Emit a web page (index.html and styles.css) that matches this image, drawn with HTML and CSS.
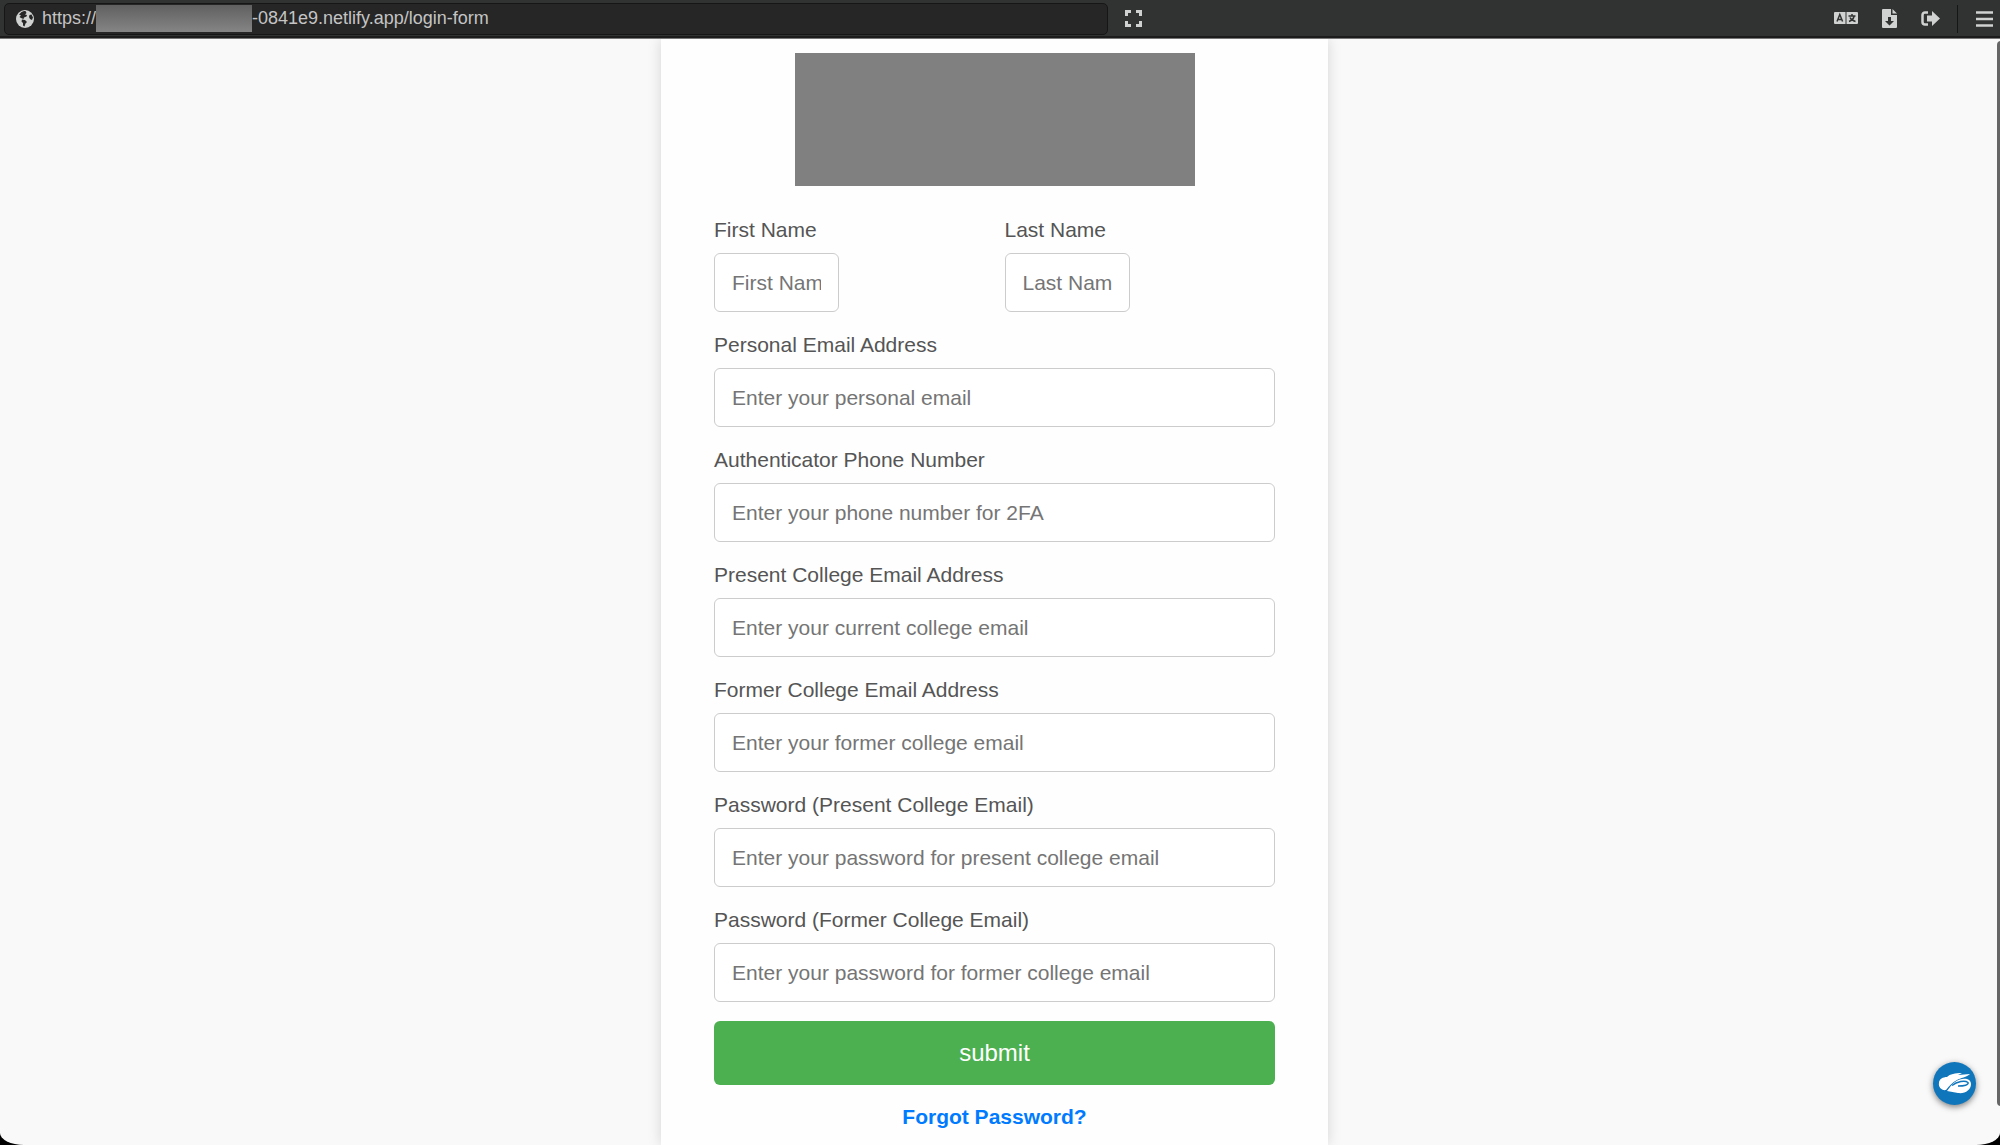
FILE: index.html
```html
<!DOCTYPE html>
<html lang="en">
<head>
    <meta charset="utf-8">
    <title>Login Form</title>
    <link rel="stylesheet" href="styles.css">
</head>
<body>
    <header class="toolbar">
        <div class="address">
            <svg class="globe" viewBox="0 0 18 18">
                <circle cx="9" cy="9" r="9" fill="#d0d1d1"/>
                <path d="M8 1 5.500 2 3 4.500 5 5.500 3.500 7 5 8 7.500 9 8 7.500 10.500 6.500 11 5 9 4.500 10.500 3 9.500 1zM6 9.500 9 10 11 12 9.500 13.500 8.500 16.500 7 15.500 7 13 5.500 11.500zM13.500 5 15.500 4.500 17 7.500 16 10 14 9 13 7z" fill="#262626"/>
            </svg>
            <span class="url"><span>https://</span><span class="hidden-host"></span><span>-0841e9.netlify.app/login-form</span></span>
        </div>
        <button class="icon-button" aria-label="Full screen">
            <svg width="17" height="17" viewBox="0 0 17 17"><path d="M1.500 6V1.500H6M11 1.500h4.500V6M15.500 11v4.500H11M6 15.500H1.500V11" fill="none" stroke="#d0d1d1" stroke-width="3"/></svg>
        </button>
        <nav class="tools">
            <button class="icon-button" aria-label="Translate">
                <svg width="24" height="13" viewBox="0 0 24 13">
                    <path d="M1 0h10.500v12H1a1 1 0 0 1-1-1V1a1 1 0 0 1 1-1zM12.500 0H23a1 1 0 0 1 1 1v10a1 1 0 0 1-1 1H12.500z" fill="#d0d1d1"/>
                    <path d="M3 9.500 5.800 2.500 8.600 9.500M4 7.500h3.600M14.500 4h7M18 2v2M20 4.500C19.500 7 17.500 8.500 15 9.500M16 5.500C17 7.500 19 8.800 21.500 9.500" fill="none" stroke="#303332" stroke-width="1.500"/>
                </svg>
            </button>
            <button class="icon-button" aria-label="Download file">
                <svg width="15" height="19" viewBox="0 0 15 19">
                    <path d="M1 0h8v6h6v12a1 1 0 0 1-1 1H1a1 1 0 0 1-1-1V1a1 1 0 0 1 1-1zM10.500 0 15 4.500h-4.500z" fill="#d0d1d1"/>
                    <path d="M6 8h3v4h3l-4.500 4.500L3 12h3z" fill="#303332"/>
                </svg>
            </button>
            <button class="icon-button" aria-label="Sign out">
                <svg width="19" height="15" viewBox="0 0 19 15">
                    <path d="M7 1.500H4A2.500 2.500 0 0 0 1.500 4v7A2.500 2.500 0 0 0 4 13.500h3" fill="none" stroke="#d0d1d1" stroke-width="2.500"/>
                    <path d="M11 0l8 7.500-8 7.500v-4.500H6v-6h5z" fill="#d0d1d1"/>
                </svg>
            </button>
            <button class="icon-button menu-button" aria-label="Menu">
                <svg width="17" height="16" viewBox="0 0 17 16"><path d="M0 1.500h17M0 8h17M0 14.500h17" stroke="#d0d1d1" stroke-width="2.500"/></svg>
            </button>
        </nav>
    </header>

    <main class="page">
        <form class="login-form">
            <div class="logo"></div>
            <div class="fields">
                <div class="name-row">
                    <div class="field">
                        <label for="first-name">First Name</label>
                        <input type="text" id="first-name" placeholder="First Name">
                    </div>
                    <div class="field">
                        <label for="last-name">Last Name</label>
                        <input type="text" id="last-name" placeholder="Last Name">
                    </div>
                </div>
                <div class="field">
                    <label for="personal-email">Personal Email Address</label>
                    <input type="email" id="personal-email" placeholder="Enter your personal email">
                </div>
                <div class="field">
                    <label for="phone">Authenticator Phone Number</label>
                    <input type="tel" id="phone" placeholder="Enter your phone number for 2FA">
                </div>
                <div class="field">
                    <label for="present-email">Present College Email Address</label>
                    <input type="email" id="present-email" placeholder="Enter your current college email">
                </div>
                <div class="field">
                    <label for="former-email">Former College Email Address</label>
                    <input type="email" id="former-email" placeholder="Enter your former college email">
                </div>
                <div class="field">
                    <label for="present-password">Password (Present College Email)</label>
                    <input type="password" id="present-password" placeholder="Enter your password for present college email">
                </div>
                <div class="field">
                    <label for="former-password">Password (Former College Email)</label>
                    <input type="password" id="former-password" placeholder="Enter your password for former college email">
                </div>
            </div>
            <button class="submit-button" type="submit">submit</button>
            <a class="forgot" href="#">Forgot Password?</a>
        </form>
        <div class="scrollbar"></div>
        <button class="badge" aria-label="Zscaler">
            <svg width="34" height="21" viewBox="0 0 34 21">
                <path d="M8 17C4 18 0 14 1 10 1 6 5 4 9 4 12 1 17 0 24 0L20 2 32 1C29 4 22 5 19 7 15 9 11 13 8 17z" fill="#fff"/>
                <path d="M17 9C24 4 33 5 33 11 33 17 27 21 20 20L9 18C12 14 14 11 17 9z" fill="#fff"/>
                <path d="M14 12.500C19 8.500 27 7 30 9.500 31 12 26 13 20 13" fill="none" stroke="#1076bc" stroke-width="1.500"/>
            </svg>
        </button>
    </main>
</body>
</html>
```
FILE: styles.css
```css
* {
    box-sizing: border-box;
}

body {
    margin: 0;
    height: 100vh;
    display: flex;
    flex-direction: column;
    overflow: hidden;
    background-color: #000;
    font-family: "Liberation Sans", Arial, sans-serif;
}

button {
    border: none;
    padding: 0;
    cursor: pointer;
    font-family: inherit;
}

.toolbar {
    flex: none;
    height: 39px;
    display: flex;
    align-items: center;
    padding: 0 7px 1px 4px;
    background-color: #303332;
    border-bottom: 1px solid #777;
    box-shadow: inset 0 -2px #1c1c1c;
}

.address {
    width: 1104px;
    height: 32px;
    display: flex;
    align-items: center;
    gap: 8px;
    padding-left: 11px;
    background-color: #262626;
    border: 1px solid #161616;
    border-radius: 5px;
}

.globe {
    width: 18px;
    height: 18px;
}

.url {
    display: flex;
    align-items: center;
    font-size: 18px;
    color: #c4c4c4;
}

.hidden-host {
    width: 156px;
    height: 27px;
    background: linear-gradient(#606060, #858585);
}

.icon-button {
    display: flex;
    background: none;
}

.address + .icon-button {
    margin-left: 17px;
}

.tools {
    display: flex;
    align-items: center;
    gap: 24px;
    margin-left: auto;
}

.menu-button {
    height: 28px;
    align-items: center;
    padding-left: 18px;
    margin-left: -7px;
    border-left: 1px solid #161616;
}

.page {
    flex: 1;
    min-height: 0;
    position: relative;
    overflow: hidden;
    padding-right: 11px;
    background-color: #f9f9f9;
    border-radius: 0 0 24px 24px / 0 0 12px 12px;
}

.login-form {
    width: 667px;
    min-height: 100%;
    margin: 0 auto;
    padding: 14px 53px;
    background-color: #fefefe;
    box-shadow: 0 0 13px rgba(0, 0, 0, 0.15);
}

.logo {
    width: 400px;
    height: 133px;
    margin: 0 auto 32px;
    background-color: #808080;
}

.fields {
    display: flex;
    flex-direction: column;
    gap: 21px;
}

.name-row {
    display: grid;
    grid-template-columns: 1fr 1fr;
    gap: 20px;
}

.name-row input {
    width: 125px;
}

label {
    display: block;
    margin-bottom: 11px;
    font-size: 21px;
    line-height: 24px;
    color: #555;
}

input {
    display: block;
    width: 100%;
    height: 59px;
    padding: 0 17px;
    border: 1px solid #ccc;
    border-radius: 6px;
    background-color: #fff;
    font-family: inherit;
    font-size: 21px;
}

input::placeholder {
    color: #757575;
}

.submit-button {
    width: 100%;
    height: 64px;
    margin-top: 19px;
    border-radius: 6px;
    background-color: #4caf50;
    color: #fff;
    font-size: 24px;
}

.forgot {
    display: block;
    margin-top: 20px;
    text-align: center;
    font-size: 21px;
    line-height: 24px;
    font-weight: bold;
    color: #007bff;
    text-decoration: none;
}

.scrollbar {
    position: absolute;
    top: 2px;
    right: -5px;
    width: 8px;
    height: 1065px;
    border-radius: 4px;
    background-color: #666;
}

.badge {
    position: absolute;
    right: 24px;
    bottom: 40px;
    width: 43px;
    height: 43px;
    display: flex;
    align-items: center;
    justify-content: center;
    border-radius: 50%;
    background-color: #1076bc;
    box-shadow: 0 2px 6px rgba(0, 0, 0, 0.5);
}
```
